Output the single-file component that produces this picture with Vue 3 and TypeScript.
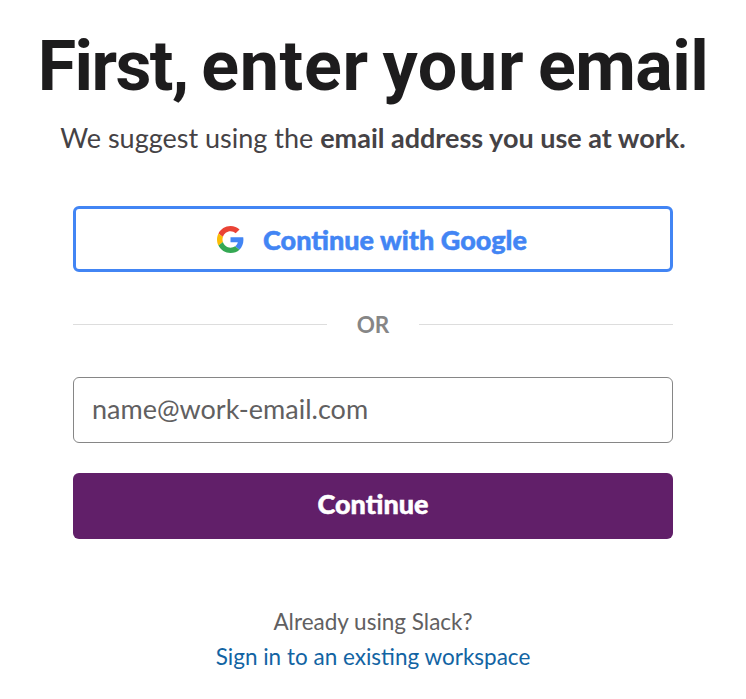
<script setup lang="ts">
import { ref } from 'vue'

const email = ref<string>('')
</script>

<template>
  <main class="page">
    <h1 class="title"><span class="lead">First,</span> enter your <span class="tail">email</span></h1>
    <p class="subtitle">We suggest using the <strong>email address you use at work.</strong></p>
    <form class="form" @submit.prevent>
      <button class="button google" type="button">
        <svg class="logo" viewBox="0 0 48 48" aria-hidden="true">
          <path fill="#EA4335" d="M24 9.5c3.54 0 6.71 1.22 9.21 3.6l6.85-6.85C35.9 2.38 30.47 0 24 0 14.62 0 6.51 5.38 2.56 13.22l7.98 6.19C12.43 13.72 17.74 9.5 24 9.5z" />
          <path fill="#4285F4" d="M46.98 24.55c0-1.57-.15-3.09-.38-4.55H24v9.02h12.94c-.58 2.96-2.26 5.48-4.78 7.18l7.73 6c4.51-4.18 7.09-10.36 7.09-17.65z" />
          <path fill="#FBBC05" d="M10.53 28.59c-.48-1.45-.76-2.99-.76-4.59s.27-3.14.76-4.59l-7.98-6.19C.92 16.46 0 20.12 0 24s.92 7.54 2.56 10.78l7.97-6.19z" />
          <path fill="#34A853" d="M24 48c6.48 0 11.93-2.13 15.89-5.81l-7.73-6c-2.15 1.45-4.92 2.3-8.16 2.3-6.26 0-11.57-4.22-13.47-9.91l-7.98 6.19C6.51 42.62 14.62 48 24 48z" />
        </svg>
        <span>Continue with Google</span>
      </button>
      <div class="divider"><span>OR</span></div>
      <input v-model="email" class="field" type="email" placeholder="name@work-email.com" aria-label="Email" />
      <button class="button submit" type="submit">Continue</button>
    </form>
    <footer class="footer">
      <span>Already using Slack?</span>
      <a href="#">Sign in to an existing workspace</a>
    </footer>
  </main>
</template>

<style>
body {
  background: #fff;
}
</style>

<style scoped>
.page {
  box-sizing: border-box;
  width: 746px;
  height: 699px;
  display: flex;
  flex-direction: column;
  align-items: center;
  overflow: hidden;
  padding-top: 28px;
  font-family: Lato, sans-serif;
  color: #454245;
}
.title {
  margin: 0;
  font: 700 70px/76px Roboto, sans-serif;
  letter-spacing: 0.7px;
  word-spacing: -4.5px;
  color: #1d1c1d;
  white-space: nowrap;
}
.lead {
  letter-spacing: -1.6px;
}
.tail {
  letter-spacing: -0.5px;
}
.subtitle {
  margin: 14px 0 0;
  font-size: 27px;
  line-height: 40px;
  white-space: nowrap;
}
.form {
  width: 600px;
  margin-top: 48px;
  display: flex;
  flex-direction: column;
}
.button {
  box-sizing: border-box;
  height: 66px;
  border: 0;
  border-radius: 6px;
  display: flex;
  align-items: center;
  justify-content: center;
  font: 900 27px/40px Lato, sans-serif;
  letter-spacing: 0;
  -webkit-text-stroke: 0.5px currentColor;
}
.google {
  gap: 19px;
  padding: 0 8px 0 6px;
  border: 3px solid #4285f4;
  background: #fff;
  color: #4285f4;
}
.google span {
  padding-top: 2px;
}
.logo {
  width: 27px;
  height: 27px;
}
.divider {
  height: 36px;
  margin: 34px 0 35px;
  display: flex;
  align-items: center;
  gap: 30px;
  font-size: 22.5px;
  font-weight: 700;
  color: #868686;
}
.divider::before,
.divider::after {
  content: '';
  flex: 1;
  height: 1px;
  background: #ddd;
}
.field {
  box-sizing: border-box;
  width: 600px;
  height: 66px;
  padding: 0 18px 3px;
  border: 1px solid #868686;
  border-radius: 6px;
  background: #fff;
  font: 400 27px/40px Lato, sans-serif;
  color: #1d1c1d;
}
.field::placeholder {
  color: #616061;
  opacity: 1;
}
.submit {
  margin-top: 30px;
  padding: 0 6px 5px;
  background: #611f69;
  color: #fff;
}
.footer {
  margin-top: 65px;
  display: flex;
  flex-direction: column;
  align-items: center;
  font-size: 22.5px;
  line-height: 35px;
  color: #616061;
}
.footer a {
  color: #1264a3;
  text-decoration: none;
}
</style>
